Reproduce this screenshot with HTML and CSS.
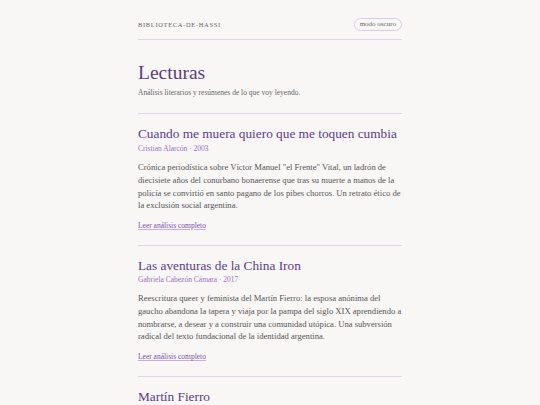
FILE: index.html
```html
<!DOCTYPE html>
<html lang="es">
<head>
<meta charset="utf-8">
<title>Biblioteca de Hassi</title>
<link rel="stylesheet" href="styles.css">
</head>
<body>
<div class="page">
  <header class="site-header">
    <span class="brand">Biblioteca-de-Hassi</span>
    <button class="mode-btn">modo oscuro</button>
  </header>
  <section class="intro">
    <h1 class="page-title">Lecturas</h1>
    <p class="page-sub">Análisis literarios y resúmenes de lo que voy leyendo.</p>
  </section>
  <article class="entry">
    <h2 class="entry-title">Cuando me muera quiero que me toquen cumbia</h2>
    <p class="entry-meta">Cristian Alarcón · 2003</p>
    <p class="entry-text">Crónica periodística sobre Víctor Manuel "el Frente" Vital, un ladrón de diecisiete años del conurbano bonaerense que tras su muerte a manos de la policía se convirtió en santo pagano de los pibes chorros. Un retrato ético de la exclusión social argentina.</p>
    <a class="entry-link" href="#">Leer análisis completo</a>
  </article>
  <article class="entry">
    <h2 class="entry-title">Las aventuras de la China Iron</h2>
    <p class="entry-meta">Gabriela Cabezón Cámara · 2017</p>
    <p class="entry-text">Reescritura queer y feminista del Martín Fierro: la esposa anónima del gaucho abandona la tapera y viaja por la pampa del siglo XIX aprendiendo a nombrarse, a desear y a construir una comunidad utópica. Una subversión radical del texto fundacional de la identidad argentina.</p>
    <a class="entry-link" href="#">Leer análisis completo</a>
  </article>
  <article class="entry">
    <h2 class="entry-title">Martín Fierro</h2>
    <p class="entry-meta">José Hernández · 1872</p>
  </article>
</div>
</body>
</html>
```
FILE: styles.css
```css
html, body {
  margin: 0;
  padding: 0;
  background: #f9f7f6;
}
body {
  font-family: "Liberation Serif", serif;
  color: #555;
  font-size: 8.6px;
  line-height: 12.7px;
}
.page {
  width: 264px;
  margin: 0 auto;
}
.site-header {
  display: flex;
  justify-content: space-between;
  align-items: center;
  padding: 18px 0 8px;
  border-bottom: 1px solid #e2d4ec;
}
.brand {
  text-transform: uppercase;
  letter-spacing: 0.1em;
  font-size: 6.5px;
  line-height: 13px;
  color: #666;
}
.mode-btn {
  font-family: inherit;
  font-size: 7px;
  color: #666;
  background: transparent;
  border: 1px solid #dccbe6;
  border-radius: 7px;
  padding: 0 5px;
  line-height: 11px;
  height: 13px;
}
.intro {
  padding: 21px 0 14px;
  border-bottom: 1px solid #e2d4ec;
}
.page-title {
  margin: 0;
  font-weight: normal;
  font-size: 19.5px;
  line-height: 23.4px;
  color: #5b3b8c;
}
.page-sub {
  margin: 3px 0 0;
  font-size: 7.5px;
  line-height: 12px;
  color: #666;
}
.entry {
  padding: 12px 0 12.5px;
  border-bottom: 1px solid #e2d4ec;
}
.entry-title {
  margin: 0;
  font-weight: normal;
  font-size: 13.3px;
  line-height: 16.8px;
  color: #5b3b8c;
}
.entry-meta {
  margin: 0;
  font-size: 7.5px;
  line-height: 12px;
  color: #9a6fc4;
}
.entry-text {
  margin: 6px 0 0;
}
.entry-link {
  display: inline-block;
  margin-top: 8px;
  font-size: 7.5px;
  line-height: 12px;
  color: #7b4fb0;
  text-decoration: underline;
  text-decoration-color: #c7aee0;
}
```
